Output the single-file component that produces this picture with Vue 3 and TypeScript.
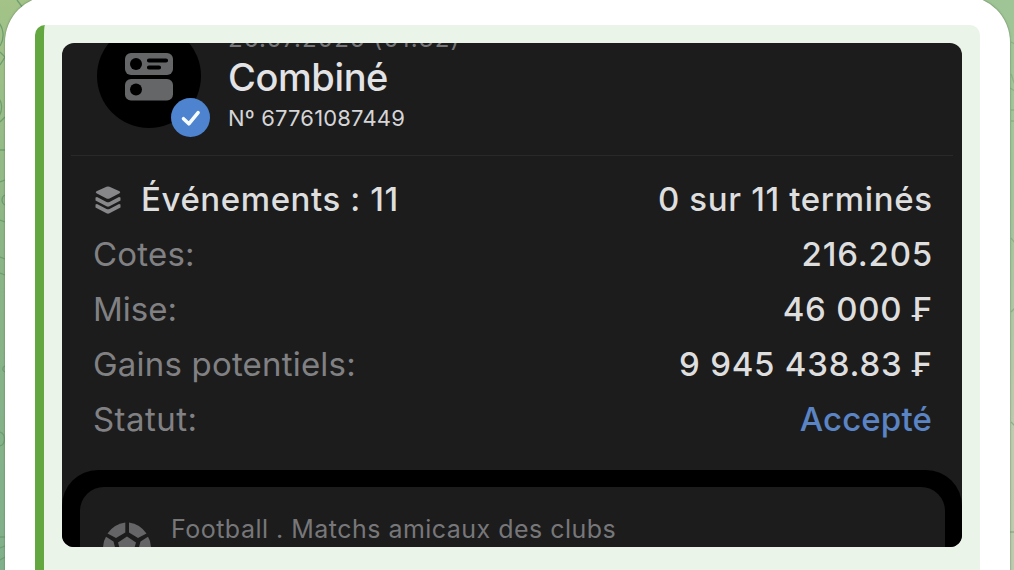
<script setup lang="ts">
interface Row {
  key: string
  label: string
  value: string
}

const rows: Row[] = [
  { key: 'cotes', label: 'Cotes:', value: '216.205' },
  { key: 'mise', label: 'Mise:', value: '46 000 ₣' },
  { key: 'gains', label: 'Gains potentiels:', value: '9 945 438.83 ₣' },
  { key: 'statut', label: 'Statut:', value: 'Accepté' },
]
</script>

<template>
  <div class="chat">
    <div class="backdrop"></div>
    <svg class="doodles left" viewBox="0 0 40 570">
      <path d="M17 0l6 8M-4 20c8 6 9 18 4 26M0 52l5 5-5 8M-2 98c4 3 5 12 1 18M0 122l5-5M0 150h5M0 182l5-2M0 220l5 2M0 257l5 2M0 273l5 2M0 432c6 2 6 12 0 14M0 537h5M0 548l5-2M0 560l5-3" />
      <path d="M5 195c-4 2-4 8 0 10M5 366c-3 1-3 5 0 6" />
    </svg>
    <svg class="doodles right" viewBox="0 0 34 570">
      <path d="M31 42l4 2M31 74c2 4 2 8 4 10M30 88l5 3M31 110h4M31 121h4M31 238l4 5M31 312l4-4M31 422l4 4M30 532h5" />
    </svg>
    <main class="message">
      <section class="quote">
        <article class="ticket">
          <header class="head">
            <div class="avatar">
              <svg class="combo" viewBox="0 0 48 48">
                <rect x="0" y="0" width="48" height="22" rx="6" />
                <rect x="0" y="26" width="48" height="21.500" rx="6" />
                <circle class="hole" cx="11" cy="11" r="6" />
                <circle class="hole" cx="11" cy="36.500" r="6" />
                <path class="slot" d="M24 7.5h17M24 14.500h10" />
              </svg>
              <svg class="check" viewBox="0 0 40 40">
                <circle cx="20" cy="20" r="20" />
                <path d="M12.800 21.200l5.500 5.300 9.500-11.500" />
              </svg>
            </div>
            <div class="titles">
              <p class="date">26.07.2025 (01:32)</p>
              <h1 class="title">Combiné</h1>
              <p class="number">Nº 67761087449</p>
            </div>
          </header>
          <div class="rows">
            <div class="row">
              <span class="events">
                <svg class="layers" viewBox="0 0 26 28">
                  <path d="M11.500.8Q13 .1 14.500.8L24.500 5.200Q26 6.200 24.500 7.200L14.500 12.500Q13 13.200 11.500 12.500L1.500 7.200Q0 6.200 1.500 5.200Z" />
                  <path d="M.5 11.500L2 11 11.500 16Q13 16.700 14.500 16L24 11 25.500 11.500V14.500L14.500 20.300Q13 21 11.500 20.300L.5 14.500Z" />
                  <path d="M.5 18.500L2 18 11.500 23Q13 23.700 14.500 23L24 18 25.500 18.500V21.500L14.500 27.300Q13 28 11.500 27.300L.5 21.500Z" />
                </svg>
                <span class="value ev">Événements : 11</span>
              </span>
              <span class="value done">0 sur 11 terminés</span>
            </div>
            <div v-for="row in rows" :key="row.key" class="row">
              <span class="label" :class="'l-' + row.key">{{ row.label }}</span>
              <span class="value" :class="'v-' + row.key">{{ row.value }}</span>
            </div>
          </div>
          <div class="tray">
            <div class="event">
              <svg class="ball" viewBox="0 0 48 48">
                <path d="M22.300 0.500V10.500L13 16 4.500 11.500Q11 2 22.300.5Z" />
                <path d="M26 .5V10.500L35 16 43.500 11.500Q37 2 26 .5Z" />
                <path d="M24 14.500L33 20.500 30 31H18L15 20.500Z" />
                <path d="M3 14.800L10.500 19.500 13.500 31 1 30Q-1.500 22 3 14.800Z" />
                <path d="M45 14.800L37.500 19.500 34.500 31 47 30Q49.500 22 45 14.800Z" />
              </svg>
              <span class="league">Football . Matchs amicaux des clubs</span>
            </div>
          </div>
        </article>
      </section>
    </main>
  </div>
</template>

<style>
body {
  margin: 0;
  overflow: hidden;
}
</style>

<style scoped>
.chat {
  position: relative;
  box-sizing: border-box;
  width: 1014px;
  height: 570px;
  padding-left: 5px;
  overflow: hidden;
  background: linear-gradient(#a3c388, #8bb586 45%, #80b08b);
  font-family: Inter, 'Liberation Sans', sans-serif;
}
.backdrop {
  position: absolute;
  top: 0;
  right: 0;
  width: 507px;
  height: 570px;
  background: linear-gradient(#9fc495, #a4c59c 40%, #bdcbae 75%, #bccaae);
}
.doodles {
  position: absolute;
  top: 0;
  height: 570px;
  fill: none;
  stroke: #6d9e70;
  stroke-width: 1.3;
}
.left {
  left: 0;
  width: 40px;
}
.right {
  right: 0;
  width: 34px;
  stroke: #8db088;
}
.message {
  position: relative;
  box-sizing: border-box;
  width: 1005px;
  height: 620px;
  margin-top: -4px;
  padding: 29px 30px 0;
  border-radius: 46px;
  background: #fff;
  box-shadow: 0 0 2px #54784f;
}
.quote {
  box-sizing: border-box;
  width: 945px;
  height: 591px;
  padding: 18px 18px 0;
  border-left: 9px solid #62a73f;
  border-radius: 10px;
  background: #ebf4e8;
}
.ticket {
  display: flex;
  flex-direction: column;
  width: 900px;
  height: 504px;
  overflow: hidden;
  border-radius: 12px;
  background: #1c1c1c;
}
.head {
  display: flex;
  flex: none;
  box-sizing: border-box;
  height: 113px;
  margin: 0 9px;
  padding-left: 26px;
  border-bottom: 1px solid #292929;
}
.avatar {
  position: relative;
  flex: none;
  width: 104px;
  height: 104px;
  margin-top: -19px;
  border-radius: 50%;
  background: #000;
}
.combo {
  position: absolute;
  left: 28px;
  top: 29px;
  width: 48px;
  height: 48px;
  fill: #656668;
}
.combo .hole {
  fill: #000;
}
.combo .slot {
  fill: none;
  stroke: #000;
  stroke-width: 4.2;
  stroke-linecap: round;
}
.check {
  position: absolute;
  left: 74px;
  top: 74px;
  width: 39px;
  height: 39px;
  fill: #4d83cf;
}
.check path {
  fill: none;
  stroke: #f5fbff;
  stroke-width: 3.6;
  stroke-linecap: round;
  stroke-linejoin: round;
}
.titles {
  display: flex;
  flex-direction: column;
  margin-left: 27px;
  white-space: nowrap;
}
.date,
.title,
.number {
  margin: 0;
}
.date {
  height: 28px;
  margin-top: -18px;
  color: #77777a;
  font-size: 24px;
  line-height: 28px;
  letter-spacing: 1.15px;
}
.title {
  height: 44px;
  margin-top: 2px;
  color: #e3e3e6;
  font-size: 38px;
  font-weight: 500;
  line-height: 44px;
  letter-spacing: -0.4px;
}
.number {
  margin-top: 5px;
  color: #d5d5d8;
  font-size: 22px;
  line-height: 28px;
  letter-spacing: 0.17px;
}
.rows {
  flex: none;
  height: 298px;
  padding: 16px 30px 0 31px;
}
.row {
  display: flex;
  justify-content: space-between;
  height: 55px;
  font-size: 33px;
  line-height: 55px;
  white-space: nowrap;
}
.events {
  display: flex;
  align-items: center;
}
.layers {
  width: 26px;
  height: 28px;
  margin: 0 20px 0 2px;
  fill: #87878a;
}
.label {
  color: #818184;
  letter-spacing: 0.2px;
}
.value {
  color: #dededf;
  font-weight: 500;
}
.ev {
  letter-spacing: 0.58px;
}
.done {
  margin-right: -0.6px;
  letter-spacing: 0.65px;
}
.v-cotes {
  margin-right: -1px;
  letter-spacing: 0.8px;
}
.v-mise,
.v-gains {
  margin-right: -0.7px;
  letter-spacing: 0.75px;
}
.l-mise {
  letter-spacing: 0;
}
.l-statut {
  letter-spacing: 0.45px;
}
.v-statut {
  color: #5a84c4;
  letter-spacing: 0.15px;
}
.tray {
  flex: none;
  box-sizing: border-box;
  height: 150px;
  padding: 17px 17px 0 18px;
  border-radius: 36px 36px 0 0;
  background: #000;
}
.event {
  display: flex;
  height: 130px;
  padding-left: 23px;
  border-radius: 24px 24px 0 0;
  background: #1c1c1c;
}
.ball {
  width: 48px;
  height: 48px;
  margin-top: 35px;
  fill: #656567;
}
.league {
  margin-left: 20px;
  margin-top: 25px;
  color: #77777a;
  font-size: 25px;
  line-height: 35px;
  letter-spacing: 0.48px;
  white-space: nowrap;
}
</style>
